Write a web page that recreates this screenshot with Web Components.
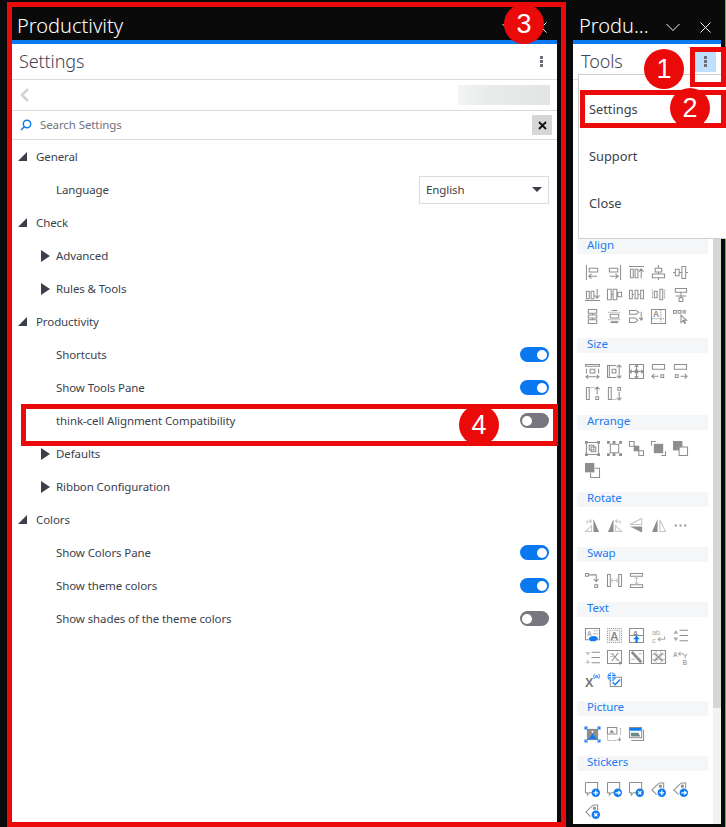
<!DOCTYPE html>
<html lang="en">
<head>
<meta charset="utf-8">
<title>Productivity settings</title>
<style>
  html, body { margin: 0; height: 827px; overflow: hidden; background: #0a0a0a; }
  body {
    display: flex;
    align-items: flex-start;
    position: relative;
    width: 726px;
    font-family: "Noto Sans", "Open Sans", sans-serif;
    font-size: 11.5px;
    color: #3a3f4c;
    --track: -.1px;
  }
  .left { margin: 7px 0 0 12px; width: 545px; height: 815px; --bar-pad: 5px; --head-pad: 7px; }
  .right { margin: 7px 0 0 16px; width: 148px; height: 817px; --bar-pad: 6px; --head-pad: 8px; }
  .edge { position: absolute; left: 725px; top: 0; width: 1px; height: 827px; background: #7fa53a; }
</style>
</head>
<body>
  <task-pane class="left" label="Productivity">
    <pane-header label="Settings"></pane-header>
    <back-row></back-row>
    <search-row></search-row>
    <setting-row kind="open">General</setting-row>
    <setting-row kind="leaf">Language<lang-select slot="control"></lang-select></setting-row>
    <setting-row kind="open">Check</setting-row>
    <setting-row kind="closed">Advanced</setting-row>
    <setting-row kind="closed">Rules &amp; Tools</setting-row>
    <setting-row kind="open">Productivity</setting-row>
    <setting-row kind="leaf">Shortcuts<toggle-switch slot="control" on></toggle-switch></setting-row>
    <setting-row kind="leaf">Show Tools Pane<toggle-switch slot="control" on></toggle-switch></setting-row>
    <setting-row kind="leaf">think-cell Alignment Compatibility<toggle-switch slot="control"></toggle-switch></setting-row>
    <setting-row kind="closed">Defaults</setting-row>
    <setting-row kind="closed">Ribbon Configuration</setting-row>
    <setting-row kind="open">Colors</setting-row>
    <setting-row kind="leaf">Show Colors Pane<toggle-switch slot="control" on></toggle-switch></setting-row>
    <setting-row kind="leaf">Show theme colors<toggle-switch slot="control" on></toggle-switch></setting-row>
    <setting-row kind="leaf">Show shades of the theme colors<toggle-switch slot="control"></toggle-switch></setting-row>
  </task-pane>

  <task-pane class="right" label="Produ...">
    <pane-header label="Tools" active></pane-header>
    <tool-list>
      <tool-section label="Align">
        <tool-icon name="a1"></tool-icon><tool-icon name="a2"></tool-icon><tool-icon name="a3"></tool-icon><tool-icon name="a4"></tool-icon><tool-icon name="a5"></tool-icon>
        <tool-icon name="a6"></tool-icon><tool-icon name="a7"></tool-icon><tool-icon name="a8"></tool-icon><tool-icon name="a9"></tool-icon><tool-icon name="a10"></tool-icon>
        <tool-icon name="a11"></tool-icon><tool-icon name="a12"></tool-icon><tool-icon name="a13"></tool-icon><tool-icon name="a14"></tool-icon><tool-icon name="a15"></tool-icon>
      </tool-section>
      <tool-section label="Size">
        <tool-icon name="s1"></tool-icon><tool-icon name="s2"></tool-icon><tool-icon name="s3"></tool-icon><tool-icon name="s4"></tool-icon><tool-icon name="s5"></tool-icon>
        <tool-icon name="s6"></tool-icon><tool-icon name="s7"></tool-icon>
      </tool-section>
      <tool-section label="Arrange">
        <tool-icon name="r1"></tool-icon><tool-icon name="r2"></tool-icon><tool-icon name="r3"></tool-icon><tool-icon name="r4"></tool-icon><tool-icon name="r5"></tool-icon>
        <tool-icon name="r6"></tool-icon>
      </tool-section>
      <tool-section label="Rotate">
        <tool-icon name="t1"></tool-icon><tool-icon name="t2"></tool-icon><tool-icon name="t3"></tool-icon><tool-icon name="t4"></tool-icon><tool-icon name="t5"></tool-icon>
      </tool-section>
      <tool-section label="Swap">
        <tool-icon name="w1"></tool-icon><tool-icon name="w2"></tool-icon><tool-icon name="w3"></tool-icon>
      </tool-section>
      <tool-section label="Text">
        <tool-icon name="x1"></tool-icon><tool-icon name="x2"></tool-icon><tool-icon name="x3"></tool-icon><tool-icon name="x4"></tool-icon><tool-icon name="x5"></tool-icon>
        <tool-icon name="x6"></tool-icon><tool-icon name="x7"></tool-icon><tool-icon name="x8"></tool-icon><tool-icon name="x9"></tool-icon><tool-icon name="x10"></tool-icon>
        <tool-icon name="x11"></tool-icon><tool-icon name="x12"></tool-icon>
      </tool-section>
      <tool-section label="Picture">
        <tool-icon name="p1"></tool-icon><tool-icon name="p2"></tool-icon><tool-icon name="p3"></tool-icon>
      </tool-section>
      <tool-section label="Stickers">
        <tool-icon name="k1"></tool-icon><tool-icon name="k2"></tool-icon><tool-icon name="k3"></tool-icon><tool-icon name="k4"></tool-icon><tool-icon name="k5"></tool-icon>
        <tool-icon name="k6"></tool-icon>
      </tool-section>
    </tool-list>
  </task-pane>

  <div class="edge"></div>

  <flyout-menu>
    <flyout-item>Settings</flyout-item>
    <flyout-item>Support</flyout-item>
    <flyout-item>Close</flyout-item>
  </flyout-menu>

  <!-- red annotations on top of the screenshot -->
  <callout-box style="left:7px;top:2px;width:559px;height:825px"></callout-box>
  <callout-box style="left:690px;top:47px;width:36px;height:40px"></callout-box>
  <callout-box style="left:580px;top:90px;width:146px;height:38px"></callout-box>
  <callout-box style="left:21px;top:404px;width:537px;height:42px"></callout-box>
  <callout-badge style="left:644px;top:49px">1</callout-badge>
  <callout-badge style="left:670px;top:88px">2</callout-badge>
  <callout-badge style="left:504px;top:4px">3</callout-badge>
  <callout-badge style="left:459px;top:405px">4</callout-badge>

<script>
const G = '#8e8e8e'
const L = '#c6c6c6'
const B = '#0f7bf2'

const blueCircle = (inner) => `<circle cx="11.5" cy="11.5" r="4.5" fill="${B}" stroke="none"/><path stroke="#fff" stroke-width="1.4" d="${inner}"/>`
const plus = 'M9 11.5h5M11.5 9v5'
const arrow = 'M9 11.5h5M12 9.5l2 2-2 2'
const cross = 'M9.8 9.8l3.4 3.4M13.2 9.8l-3.4 3.4'
const note = '<path d="M.5 .5h13v8M8 11.5H4.500L2.500 14v-2.500H.5v-11"/>'
const tag = '<path d="M6 13.500.9 8.500 6 3.500l3-2.500h4.500v6"/><circle cx="10" cy="4.500" r="1.200" fill="#8e8e8e"/>'
const letter = (x, y, s, t, c) => `<text x="${x}" y="${y}" font-size="${s}" font-family="Liberation Sans, sans-serif" font-weight="700" fill="${c || G}" stroke="none">${t}</text>`

const ICONS = {
  a1: '<path d="M1.500 0v16M4.500 3.500h9v4h-9zM13 12H4M7 9.500 4 12l3 2.500"/>',
  a2: '<path d="M14.500 0v16M2.500 3.500h9v4h-9zM3 12h9M9 9.500l3 2.500-3 2.500"/>',
  a3: '<path d="M0 1.500h16M1.500 4.500h3v9h-3zM6.500 4.500h3v9h-3zM13 14V4M10.500 7 13 4l2.500 3"/>',
  a4: '<path d="M8 0v3M4.500 3.500h7v4h-7zM8 8v2M1.500 9.500h13v4h-13zM8 14v2"/>',
  a5: '<path d="M0 8h2M2.500 4.500h4v7h-4zM7 8h2M9.500 1.500h4v13h-4zM14 8h2"/>',
  a6: '<path d="M0 14.500h16M1.500 4.500h3v8h-3zM6.500 4.500h3v8h-3zM13 2v10M10.500 9l2.500 3 2.500-3"/>',
  a7: '<path d="M.5 2.500h4v11h-4zM4.500 8h2M6.500 2.500h4v11h-4zM10.500 8h1M11.500 5.500h4v5h-4z"/>',
  a8: '<path d="M.5 3.500h3v9h-3zM3.500 8h2M6.500 3.500h3v9h-3zM9.500 8h2M12.500 3.500h3v9h-3z"/>',
  a9: '<path stroke-dasharray="1 1" d="M1.500 3v10M14.500 3v10"/><path d="M3.500 4.500h3v7h-3zM9.500 2.500h3v11h-3z"/>',
  a10: '<path d="M2.500 1.500h12v4h-12zM8.500 6v3M3 9.500h11M8.500 10v1M6.500 11.500h4v4h-4z"/>',
  a11: '<path d="M3.500.5h9v4h-9zM8 5v1M3.500 6.500h9v3h-9zM8 10v1M3.500 11.500h9v4h-9z"/>',
  a12: '<path stroke-dasharray="1 1" d="M1 3.500h14M1 11.500h14"/><path d="M5 1.500h6M3.500 5.500h9v4h-9z"/><path stroke-width="2" d="M4 14h8"/>',
  a13: '<path d="M.5 1.500h7l3 2-3 2h-7zM.5 9.500h6l3 2.500-3 2.500h-6zM13 3v9M11 9.500l2 2.500 2-2.500"/>',
  a14: `<path d="M.5.5h15v15H.5z"/><path stroke-dasharray="1 1" d="M10.500 1v14M1 10.500h14"/>${letter(2, 9, 9, 'A')}`,
  a15: '<path d="M.5 1.500h3v3h-3zM5.500 1.500h3v3h-3z"/><path fill="#b5b5b5" stroke="none" d="M10 1h4v4h-4z"/><path d="M8.500 6.500v8l2-2 2 3 1-1-2-2.500h3z"/>',

  s1: '<path d="M.5 .5h15v2H.5zM5.500 5.500h5v4h-5zM1.500 5v5M14.500 5v5M1 13.500h14M3.500 11.500l-2.500 2 2.500 2M12.500 11.500l2.500 2-2.500 2"/>',
  s2: '<path d="M.5 1.500h2v13h-2zM5.500 5.500h4v4h-4zM3 1.500h7M3 14.500h7"/><path d="M13 1v14M10.500 3.500 13 1l2.500 2.500M10.500 12.500 13 15l2.500-2.500"/>',
  s3: '<path d="M.5.5h15v15H.5zM8 1v14M1 8h14M6 3l2-2 2 2M6 13l2 2 2-2M3 6 1 8l2 2M13 6l2 2-2 2"/><circle cx="8" cy="8" r="1.800" fill="#8e8e8e"/>',
  s4: '<path d="M1.500.5h13v5h-13zM1.500 5v1M10.500 11.500h3v3h-3zM1 13h7M3.500 10.500 1 13l2.500 2.500"/>',
  s5: '<path d="M1.500.5h13v5h-13zM14.500 5v1M2.500 11.500h3v3h-3zM8 13h7M12.500 10.500 15 13l-2.500 2.500"/>',
  s6: '<path d="M1.500 1.500h3v13h-3zM11.500 11.500h3v3h-3zM13 9V1M10.500 3.500 13 1l2.500 2.500"/><path stroke-dasharray="1 1" d="M5 1.500h5"/>',
  s7: '<path d="M1.500 1.500h3v13h-3zM11.500 1.500h3v3h-3zM13 6v9M10.500 12.500 13 15l2.500-2.500"/><path stroke-dasharray="1 1" d="M5 14.500h5"/>',

  r1: '<path fill="#8e8e8e" stroke="none" d="M0 0h3v3H0zM13 0h3v3h-3zM0 13h3v3H0zM13 13h3v3h-3z"/><path d="M3 1.500h10M3 14.500h10M1.500 3v10M14.500 3v10M4.500 4.500h5v5h-5zM6.500 6.500h5v5h-5z"/>',
  r2: '<path fill="#8e8e8e" stroke="none" d="M0 0h3v3H0zM13 0h3v3h-3zM0 13h3v3H0zM13 13h3v3h-3zM6 0h3v3H6zM6 13h3v3H6z"/><path d="M3.500 3.500h9v9h-9z"/>',
  r3: '<path d="M.5.5h5v5h-5zM10.500 10.500h5v5h-5z"/><path fill="#8e8e8e" stroke="none" d="M5 5h6v6H5z"/>',
  r4: '<path d="M.5 5V.5H5M11 15.500h4.500V11"/><path fill="#8e8e8e" stroke="none" d="M3 3h10v10H3z"/>',
  r5: '<path fill="#8e8e8e" stroke="none" d="M0 0h10v10H0z"/><path d="M6.500 6.500h9v9h-9z" fill="#fff"/>',
  r6: '<path fill="#8e8e8e" stroke="none" d="M0 0h10v10H0z"/><path d="M10.500 5.500h5v10H6v-5"/>',

  t1: `<path stroke="${L}" d="M7 8 .5 14.500H7zM2 6V3.500h5M5 1.500l2 2-2 2"/><path fill="#8e8e8e" stroke="none" d="M9 1v14h6z"/>`,
  t2: `<path stroke="${L}" d="M9 8l6.500 6.500H9zM14 6V3.500H9M11 1.500l-2 2 2 2"/><path fill="#8e8e8e" stroke="none" d="M7 1v14H1z"/>`,
  t3: `<path stroke="${L}" d="M13.500.5v6.500H1z"/><path fill="#8e8e8e" stroke="none" d="M1 9h13v6.500z"/>`,
  t4: `<path fill="#8e8e8e" stroke="none" d="M7 1v14H1z"/><path stroke="${L}" d="M9.500 2v12.500h6z"/>`,
  t5: '<path fill="#8e8e8e" stroke="none" d="M2 7h2v2H2zM7 7h2v2H7zM12 7h2v2h-2z"/>',

  w1: '<path d="M.5 .5h3v3h-3zM10.500 12.500h3v3h-3zM4 2h8v7M9.500 6.500 12 9l2.500-2.500"/>',
  w2: `<path d="M.5 1.500h3v13h-3zM12.500 1.500h3v13h-3z"/><path stroke="${L}" d="M4 8h8M6 6 4 8l2 2M10 6l2 2-2 2"/>`,
  w3: `<path d="M1.500.5h13v3h-13zM1.500 12.500h13v3h-13z"/><path stroke="${L}" d="M8 4v8M6 6l2-2 2 2M6 10l2 2 2-2"/>`,

  x1: `<path d="M.5.5h15v12H.5z"/>${letter(2, 8, 7, 'A', '#aaa')}<path stroke="${L}" d="M9 3h5M9 6h5"/><path fill="${B}" stroke="none" d="M4 11c2-3 6-3 8-2l2 2-3 3H6z"/>`,
  x2: `<path stroke-dasharray="1 1" d="M.5.5h15v15H.5z"/><path d="M2.500 2.500h11v11h-11z" stroke="${L}"/>${letter(3.500, 13, 12, 'A')}`,
  x3: `<path d="M.5.5h15v15H.5zM1 8h14"/>${letter(4, 8, 8, 'A')}<path fill="${B}" stroke="none" d="M8 8l3.500 4H9.200v4H6.800v-4H4.500z"/>`,
  x4: `<text x="1" y="7" font-size="8" font-family="Liberation Sans, sans-serif" fill="#aaa" stroke="none">ab</text><text x="1" y="15.500" font-size="8" font-family="Liberation Sans, sans-serif" fill="#aaa" stroke="none">c</text><path stroke="#aaa" d="M14.500 9v3h-7M10 10l-2.500 2 2.500 2"/>`,
  x5: '<path fill="#aaa" stroke="none" d="M3 2 .5 6h5zM3 14 .5 10h5z"/><path d="M7 2.500h9M7 8h9M7 13.500h9"/>',
  x6: `<path fill="${L}" stroke="none" d="M3 6 .5 2h5zM3 10 .5 14h5z"/><path d="M7 2.500h9M7 8h9M7 13.500h9"/>`,
  x7: `<path d="M.5.5h15v14H.5z"/><path stroke="${L}" d="M3 4h5M3 7h4M9 11h4"/><path d="M5 4l8 8M12 3 5 12"/><circle cx="14" cy="14" r="1.500" fill="#8e8e8e" stroke="none"/>`,
  x8: `<path d="M.5.5h15v14H.5z"/><path stroke-width="3" d="M3 2l10 11"/><path stroke="${L}" d="M2 10h4M10 4h4"/>`,
  x9: `<path d="M.5.5h15v14H.5z"/><path stroke="${L}" d="M1 5h14M1 10h14M5.500 1v13M10.500 1v13"/><path d="M3 3l10 9M13 3 3 12"/>`,
  x10: `${letter(0, 7, 7, 'A', '#aaa')}<path stroke="#aaa" d="M6 4h5M8 2 6 4l2 2M11 4l2 3M15 4l-2 3v2"/>${letter(10, 16.500, 7, 'B', '#aaa')}`,
  x11: `${letter(0, 16.500, 13.500, 'X', '#777')}<text x="8.500" y="6" font-size="6" font-family="Liberation Sans, sans-serif" font-weight="700" fill="${B}" stroke="none">(a)</text>`,
  x12: `<path d="M7 5.500h8.500v10H3.500V9"/><circle cx="5" cy="5" r="4.500" fill="${B}" stroke="none"/><path stroke="#fff" d="M.5 5h9M5 .5v9M2 2.500h6M2 7.500h6"/><path stroke="${B}" stroke-width="1.500" d="M6 11l2.500 2.500L14 8"/>`,

  p1: `<path fill="#8e8e8e" stroke="none" d="M2 2h12v12H2z"/><path fill="${B}" stroke="none" d="M3 13l3-3 2-3 3 4 2 2z"/><circle cx="8" cy="5" r="1" fill="#fff" stroke="none"/><path stroke="${B}" d="M0 3V0h3M13 0h3v3M0 13v3h3M13 16h3v-3M0 0l3 3M16 0l-3 3M0 16l3-3M16 16l-3-3"/>`,
  p2: '<path stroke-dasharray="1 1" d="M.5 5v9.500H11M14.500 1v7"/><path d="M.5 .5h10v7h-10z"/><path fill="#8e8e8e" stroke="none" d="M3 5l2-2 3 3H3z"/><path d="M11 13.500h4M13.500 11v4"/>',
  p3: `<path d="M.5.5h13v11H.5zM2.500 14.500h13V3"/><path fill="${B}" stroke="none" d="M1 1h12v3H1z"/><path fill="#6b8a8a" stroke="none" d="M2 6h8l2 4H2z"/>`,

  k1: note + blueCircle(plus),
  k2: note + blueCircle(arrow),
  k3: note + blueCircle(cross),
  k4: tag + blueCircle(plus),
  k5: tag + blueCircle(arrow),
  k6: tag + blueCircle(cross)
}

class TaskPane extends HTMLElement {
  constructor () {
    super()
    this.shadowDOM = this.attachShadow({ mode: 'open' })
  }

  connectedCallback () {
    this.shadowDOM.innerHTML = `
      <style>
        :host { display: flex; flex-direction: column; }
        .bar {
          height: 33px;
          flex: none;
          display: flex;
          align-items: center;
          color: #fff;
          background: #0a0a0a;
          padding-left: var(--bar-pad);
          font-size: 20px;
          font-weight: 300;
        }
        .name { flex: 1; padding-top: 4px; }
        .btn { width: 32px; height: 33px; box-sizing: border-box; padding-top: 7px; display: flex; align-items: center; justify-content: center; }
        .line { height: 4px; flex: none; background: #0a78ef; }
        .body { flex: 1; min-height: 0; background: #fff; display: flex; flex-direction: column; }
        svg { fill: none; stroke: #f4f4f4; stroke-width: 1; }
      </style>
      <div class="bar">
        <span class="name">${this.getAttribute('label')}</span>
        <span class="btn"><svg width="14" height="9" viewBox="0 0 14 9"><path d="M.5 1 7 7.500 13.500 1"/></svg></span>
        <span class="btn"><svg width="11" height="11" viewBox="0 0 11 11"><path d="M.5.5l10 10M10.500.5l-10 10"/></svg></span>
      </div>
      <div class="line"></div>
      <div class="body"><slot></slot></div>`
  }
}

class PaneHeader extends HTMLElement {
  constructor () {
    super()
    this.shadowDOM = this.attachShadow({ mode: 'open' })
  }

  connectedCallback () {
    const active = this.hasAttribute('active')
    this.shadowDOM.innerHTML = `
      <style>
        :host { display: flex; flex: none; align-items: center; height: 35px; border-bottom: 1px solid #dcdcdc; padding: 0 5px 0 var(--head-pad); font-size: 18px; color: #3f4552; font-weight: 300; }
        .name { flex: 1; letter-spacing: -.1px; padding-bottom: 2px; }
        .more { width: 21px; height: 21px; display: flex; align-items: center; justify-content: center; background: ${active ? '#bfdfff' : 'transparent'}; }
        svg { fill: #6d6e78; }
      </style>
      <span class="name">${this.getAttribute('label')}</span>
      <span class="more"><svg width="3" height="11" viewBox="0 0 3 11"><path d="M0 0h3v3H0zM0 4h3v3H0zM0 8h3v3H0z"/></svg></span>`
  }
}

class BackRow extends HTMLElement {
  constructor () {
    super()
    this.shadowDOM = this.attachShadow({ mode: 'open' })
  }

  connectedCallback () {
    this.shadowDOM.innerHTML = `
      <style>
        :host { display: flex; flex: none; align-items: center; justify-content: space-between; height: 30px; border-bottom: 1px solid #dcdcdc; padding: 0 7px 0 8px; }
        .blur { width: 92px; height: 20px; background: linear-gradient(90deg, #f3f4f4, #e9eaea 35%, #e3e4e5); }
        svg { fill: none; stroke: #d2d2d2; stroke-width: 2.500; }
      </style>
      <svg width="10" height="14" viewBox="0 0 10 14"><path d="M8 1 2 7l6 6"/></svg>
      <div class="blur"></div>`
  }
}

class SearchRow extends HTMLElement {
  constructor () {
    super()
    this.shadowDOM = this.attachShadow({ mode: 'open' })
  }

  connectedCallback () {
    this.shadowDOM.innerHTML = `
      <style>
        :host { display: flex; flex: none; align-items: center; height: 28px; border-bottom: 1px solid #dcdcdc; padding: 0 5px 0 8px; color: #6f7480; }
        .text { flex: 1; margin-left: 8px; letter-spacing: var(--track); padding-bottom: 1px; }
        .clear { width: 20px; height: 20px; background: #d6d6d6; display: flex; align-items: center; justify-content: center; }
        .lens { fill: none; stroke: #0f7bf2; stroke-width: 1.500; }
        .x { fill: none; stroke: #111; stroke-width: 1.800; }
      </style>
      <svg class="lens" width="12" height="12" viewBox="0 0 12 12"><circle cx="7" cy="5" r="3.700"/><path d="M4.300 7.700 1 11"/></svg>
      <span class="text">Search Settings</span>
      <span class="clear"><svg class="x" width="9" height="9" viewBox="0 0 9 9"><path d="M1 1l7 7M8 1 1 8"/></svg></span>`
  }
}

class SettingRow extends HTMLElement {
  constructor () {
    super()
    this.shadowDOM = this.attachShadow({ mode: 'open' })
  }

  connectedCallback () {
    const kind = this.getAttribute('kind')
    let mark = ''
    if (kind === 'open') mark = '<svg width="9" height="9" viewBox="0 0 9 9"><path d="M9 0v9H0z"/></svg>'
    if (kind === 'closed') mark = '<svg width="9" height="12" viewBox="0 0 9 12"><path d="M0 0l9 6-9 6z"/></svg>'
    this.shadowDOM.innerHTML = `
      <style>
        :host { display: flex; flex: none; align-items: center; box-sizing: border-box; height: 33px; padding: 0 8px 0 ${kind === 'open' ? 6 : 29}px; }
        .mark { width: ${kind === 'open' ? 18 : 15}px; flex: none; display: flex; align-items: center; }
        .label { flex: 1; letter-spacing: var(--track); }
        svg { fill: #3b3f4a; }
      </style>
      <span class="mark">${mark}</span>
      <span class="label"><slot></slot></span>
      <slot name="control"></slot>`
  }
}

class ToggleSwitch extends HTMLElement {
  constructor () {
    super()
    this.shadowDOM = this.attachShadow({ mode: 'open' })
  }

  connectedCallback () {
    const on = this.hasAttribute('on')
    this.shadowDOM.innerHTML = `
      <style>
        :host {
          display: flex;
          align-items: center;
          justify-content: ${on ? 'flex-end' : 'flex-start'};
          width: 29px;
          height: 15px;
          padding: 0 2px;
          box-sizing: border-box;
          border-radius: 8px;
          background: ${on ? '#0a78ef' : '#76777f'};
        }
        i { display: block; width: 10px; height: 10px; border-radius: 50%; background: #fff; }
      </style>
      <i></i>`
  }
}

class LangSelect extends HTMLElement {
  constructor () {
    super()
    this.shadowDOM = this.attachShadow({ mode: 'open' })
  }

  connectedCallback () {
    this.shadowDOM.innerHTML = `
      <style>
        :host { display: flex; align-items: center; justify-content: space-between; box-sizing: border-box; width: 130px; height: 28px; border: 1px solid #dcdcdc; padding: 0 6px; letter-spacing: var(--track); }
        svg { fill: #3b3f4a; }
      </style>
      <span>English</span>
      <svg width="10" height="5" viewBox="0 0 10 5"><path d="M0 0h10L5 5z"/></svg>`
  }
}

class ToolList extends HTMLElement {
  constructor () {
    super()
    this.shadowDOM = this.attachShadow({ mode: 'open' })
  }

  connectedCallback () {
    this.shadowDOM.innerHTML = `
      <style>
        :host { display: flex; flex: 1; min-height: 0; }
        .list { flex: 1; overflow: hidden; padding: 159px 5px 0 4px; }
        .bar { flex: none; width: 8px; background: #f2f2f2; }
        .thumb { height: 628px; background: #d6d6d6; }
      </style>
      <div class="list"><slot></slot></div>
      <div class="bar"><div class="thumb"></div></div>`
  }
}

class ToolSection extends HTMLElement {
  constructor () {
    super()
    this.shadowDOM = this.attachShadow({ mode: 'open' })
  }

  connectedCallback () {
    this.shadowDOM.innerHTML = `
      <style>
        :host { display: block; }
        .head { height: 15px; line-height: 12px; background: #f5f6f8; color: #1a7cf0; padding-left: 10px; font-size: 11.5px; letter-spacing: -.1px; }
        .grid { display: grid; grid-template-columns: repeat(5, 22px); grid-auto-rows: 22px; padding: 7px 0 11px 4px; }
      </style>
      <div class="head">${this.getAttribute('label')}</div>
      <div class="grid"><slot></slot></div>`
  }
}

class ToolIcon extends HTMLElement {
  constructor () {
    super()
    this.shadowDOM = this.attachShadow({ mode: 'open' })
  }

  connectedCallback () {
    this.shadowDOM.innerHTML = `
      <style>
        :host { display: flex; align-items: center; justify-content: center; }
        svg { fill: none; stroke: ${G}; stroke-width: 1.100; overflow: visible; }
      </style>
      <svg width="15" height="15" viewBox="0 0 16 16">${ICONS[this.getAttribute('name')]}</svg>`
  }
}

class FlyoutMenu extends HTMLElement {
  constructor () {
    super()
    this.shadowDOM = this.attachShadow({ mode: 'open' })
  }

  connectedCallback () {
    this.shadowDOM.innerHTML = `
      <style>
        :host { position: absolute; left: 578px; top: 74px; width: 150px; box-sizing: border-box; height: 165px; padding: 11px 0; background: #fff; border: 1px solid #cfcfcf; }
      </style>
      <slot></slot>`
  }
}

class FlyoutItem extends HTMLElement {
  constructor () {
    super()
    this.shadowDOM = this.attachShadow({ mode: 'open' })
  }

  connectedCallback () {
    this.shadowDOM.innerHTML = `
      <style>
        :host { display: flex; align-items: center; box-sizing: border-box; height: 47px; padding: 0 0 2px 10px; font-size: 12.8px; }
      </style>
      <slot></slot>`
  }
}

class CalloutBox extends HTMLElement {
  constructor () {
    super()
    this.shadowDOM = this.attachShadow({ mode: 'open' })
  }

  connectedCallback () {
    this.shadowDOM.innerHTML = `
      <style>
        :host { position: absolute; box-sizing: border-box; border: 5px solid #ea0a0a; }
      </style>`
  }
}

class CalloutBadge extends HTMLElement {
  constructor () {
    super()
    this.shadowDOM = this.attachShadow({ mode: 'open' })
  }

  connectedCallback () {
    this.shadowDOM.innerHTML = `
      <style>
        :host {
          position: absolute;
          display: flex;
          align-items: center;
          justify-content: center;
          width: 40px;
          height: 40px;
          border-radius: 50%;
          background: #ea0a0a;
          color: #fff;
          font: 27px "Liberation Sans", sans-serif;
        }
      </style>
      <slot></slot>`
  }
}

customElements.define('task-pane', TaskPane)
customElements.define('pane-header', PaneHeader)
customElements.define('back-row', BackRow)
customElements.define('search-row', SearchRow)
customElements.define('setting-row', SettingRow)
customElements.define('toggle-switch', ToggleSwitch)
customElements.define('lang-select', LangSelect)
customElements.define('tool-list', ToolList)
customElements.define('tool-section', ToolSection)
customElements.define('tool-icon', ToolIcon)
customElements.define('flyout-menu', FlyoutMenu)
customElements.define('flyout-item', FlyoutItem)
customElements.define('callout-box', CalloutBox)
customElements.define('callout-badge', CalloutBadge)
</script>
</body>
</html>
